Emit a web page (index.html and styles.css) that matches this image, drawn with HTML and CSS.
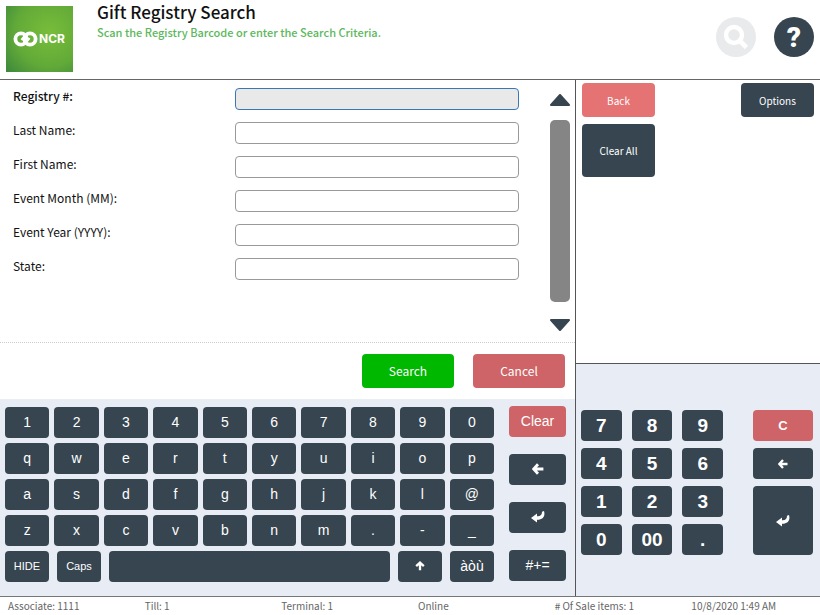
FILE: index.html
```
<!DOCTYPE html>
<html lang="en">
<head>
    <meta charset="UTF-8">
    <meta name="viewport" content="width=device-width, initial-scale=1.0">
    <title>Gift Registry Search</title>
    <link rel="stylesheet" href="styles.css">
</head>
<body>
    <!-- shared icons -->
    <svg class="icon-defs" aria-hidden="true">
        <symbol id="icon-back" viewBox="0 0 12 12">
            <path d="M6 1.2 L1.6 6 L6 10.8 M2 6 H11.4" fill="none" stroke="#fff" stroke-width="2.8"/>
        </symbol>
        <symbol id="icon-up" viewBox="0 0 12 12">
            <path d="M1.4 6.2 L6 2 L10.6 6.2 M6 2.4 V11" fill="none" stroke="#fff" stroke-width="2.8"/>
        </symbol>
        <symbol id="icon-enter" viewBox="0 0 14 12">
            <path d="M0 7 L6 2.6 V5.2 C9.6 5.4 11 3.8 11 .8 L13 0 C14.6 5.6 11.6 9 6 8.8 V11.6 Z" fill="#fff"/>
        </symbol>
    </svg>

    <header class="header">
        <svg class="logo" viewBox="0 0 67 66" role="img" aria-label="NCR">
            <defs>
                <radialGradient id="logo-fill" cx="65%" cy="40%" r="85%">
                    <stop offset="0" stop-color="#78bd3a"/>
                    <stop offset="0.6" stop-color="#62aa38"/>
                    <stop offset="1" stop-color="#3f8a3c"/>
                </radialGradient>
            </defs>
            <rect width="67" height="66" fill="url(#logo-fill)"/>
            <circle cx="15" cy="33" r="5.6" fill="none" stroke="#fff" stroke-width="3.8"/>
            <circle cx="24" cy="33" r="5.6" fill="none" stroke="#fff" stroke-width="3.8"/>
            <path d="M15.5 34 L20 28.5 M19 37.5 L23.5 32" stroke="#fff" stroke-width="2.4"/>
            <text class="logo-text" x="33" y="37">NCR</text>
        </svg>
        <div class="header-text">
            <h1>Gift Registry Search</h1>
            <p>Scan the Registry Barcode or enter the Search Criteria.</p>
        </div>
        <div class="header-buttons">
            <button class="round-button disabled" aria-label="Search" disabled>
                <svg width="26" height="26" viewBox="0 0 26 26">
                    <circle cx="11" cy="11" r="8" fill="none" stroke="#fff" stroke-width="4.4"/>
                    <path d="M17 17 L23.5 23.5" stroke="#fff" stroke-width="4.6"/>
                </svg>
            </button>
            <button class="round-button">?</button>
        </div>
    </header>

    <main class="main">
        <section class="left">
            <div class="form-area">
                <form class="fields" id="searchForm">
                    <label class="active" for="registry">Registry #:</label>
                    <input class="active" type="text" id="registry">
                    <label for="lastName">Last Name:</label>
                    <input type="text" id="lastName">
                    <label for="firstName">First Name:</label>
                    <input type="text" id="firstName">
                    <label for="month">Event Month (MM):</label>
                    <input type="text" id="month">
                    <label for="year">Event Year (YYYY):</label>
                    <input type="text" id="year">
                    <label for="state">State:</label>
                    <input type="text" id="state">
                </form>
                <div class="scroller">
                    <button class="scroll-arrow" aria-label="Scroll up">
                        <svg width="20" height="12" viewBox="0 0 20 12"><path d="M10 1 L19 11 H1 Z" fill="#36454f" stroke="#36454f" stroke-width="2" stroke-linejoin="round"/></svg>
                    </button>
                    <div class="scroll-bar"></div>
                    <button class="scroll-arrow" aria-label="Scroll down">
                        <svg width="20" height="12" viewBox="0 0 20 12"><path d="M10 11 L19 1 H1 Z" fill="#36454f" stroke="#36454f" stroke-width="2" stroke-linejoin="round"/></svg>
                    </button>
                </div>
            </div>

            <div class="actions">
                <button class="search" form="searchForm">Search</button>
                <button class="cancel">Cancel</button>
            </div>

            <div class="keyboard">
                <div class="keys">
                    <div class="key-grid">
                        <button>1</button>
                        <button>2</button>
                        <button>3</button>
                        <button>4</button>
                        <button>5</button>
                        <button>6</button>
                        <button>7</button>
                        <button>8</button>
                        <button>9</button>
                        <button>0</button>
                        <button>q</button>
                        <button>w</button>
                        <button>e</button>
                        <button>r</button>
                        <button>t</button>
                        <button>y</button>
                        <button>u</button>
                        <button>i</button>
                        <button>o</button>
                        <button>p</button>
                        <button>a</button>
                        <button>s</button>
                        <button>d</button>
                        <button>f</button>
                        <button>g</button>
                        <button>h</button>
                        <button>j</button>
                        <button>k</button>
                        <button>l</button>
                        <button>@</button>
                        <button>z</button>
                        <button>x</button>
                        <button>c</button>
                        <button>v</button>
                        <button>b</button>
                        <button>n</button>
                        <button>m</button>
                        <button>.</button>
                        <button>-</button>
                        <button>_</button>
                    </div>
                    <div class="bottom-keys">
                        <button class="small">HIDE</button>
                        <button class="small">Caps</button>
                        <button aria-label="Space"></button>
                        <button aria-label="Shift"><svg width="10" height="10"><use href="#icon-up"/></svg></button>
                        <button>àòù</button>
                    </div>
                </div>
                <div class="side-keys">
                    <button class="red">Clear</button>
                    <button aria-label="Backspace"><svg width="12" height="12"><use href="#icon-back"/></svg></button>
                    <button aria-label="Enter"><svg width="14" height="12"><use href="#icon-enter"/></svg></button>
                    <button>#+=</button>
                </div>
            </div>
        </section>

        <section class="right">
            <div class="menu">
                <div class="menu-column">
                    <button class="back">Back</button>
                    <button class="tall">Clear All</button>
                </div>
                <div class="menu-column">
                    <button>Options</button>
                </div>
            </div>
            <div class="numpad">
                <div class="digits">
                    <button>7</button>
                    <button>8</button>
                    <button>9</button>
                    <button>4</button>
                    <button>5</button>
                    <button>6</button>
                    <button>1</button>
                    <button>2</button>
                    <button>3</button>
                    <button>0</button>
                    <button>00</button>
                    <button>.</button>
                </div>
                <div class="numpad-side">
                    <button class="red">C</button>
                    <button aria-label="Backspace"><svg width="10" height="10"><use href="#icon-back"/></svg></button>
                    <button class="enter" aria-label="Enter"><svg width="14" height="12"><use href="#icon-enter"/></svg></button>
                </div>
            </div>
        </section>
    </main>

    <footer class="footer">
        <span>Associate: 1111</span>
        <span>Till: 1</span>
        <span>Terminal: 1</span>
        <span>Online</span>
        <span># Of Sale items: 1</span>
        <span>10/8/2020 1:49 AM</span>
    </footer>
</body>
</html>
```
FILE: styles.css
```
* {
    box-sizing: border-box;
}
body {
    margin: 0;
    min-height: 100vh;
    display: flex;
    flex-direction: column;
    background-color: #fff;
    color: #111;
    font-family: "Noto Sans CJK SC", "Open Sans", sans-serif;
    font-size: 12px;
}
button {
    display: flex;
    align-items: center;
    justify-content: center;
    padding: 0;
    border: none;
    border-radius: 4px;
    background-color: #36454f;
    color: #fff;
    font-family: inherit;
    font-size: 12px;
    cursor: pointer;
}
.icon-defs {
    display: none;
}

/* Header */
.header {
    display: flex;
    align-items: flex-start;
    height: 80px;
    padding: 0 6px;
    border-bottom: 1px solid #666;
}
.logo {
    width: 67px;
    height: 66px;
    margin-top: 6px;
}
.logo-text {
    fill: #fff;
    font-family: Inter, sans-serif;
    font-size: 12px;
    font-weight: 700;
}
.header-text {
    flex: 1;
    margin-left: 24px;
}
.header-text h1 {
    margin: 0;
    font-size: 17px;
    font-weight: 500;
    line-height: 24px;
}
.header-text p {
    margin: 0;
    color: #5cb85c;
    font-size: 11px;
    font-weight: 500;
    line-height: 16px;
}
.header-buttons {
    display: flex;
    gap: 18px;
    margin-top: 17px;
}
.round-button {
    width: 40px;
    height: 40px;
    border-radius: 50%;
    font-family: Roboto, sans-serif;
    font-size: 28px;
    font-weight: 900;
}
.round-button.disabled {
    background-color: #e9eaeb;
}

/* Main */
.main {
    flex: 1;
    display: grid;
    grid-template-columns: 575fr 245fr;
}
.left {
    display: flex;
    flex-direction: column;
}
.form-area {
    flex: 1;
    display: flex;
    padding: 8px 5px 11px 13px;
    border-bottom: 1px dotted #ccc;
}
.fields {
    flex: 1;
    display: grid;
    grid-template-columns: 222px 1fr;
    grid-auto-rows: 22px;
    row-gap: 12px;
    align-content: start;
}
.fields label {
    line-height: 16px;
}
.fields label.active {
    font-weight: 500;
}
.fields input {
    width: 100%;
    height: 22px;
    padding: 0 6px;
    border: 1px solid #999;
    border-radius: 4px;
    background-color: #fff;
    font-family: inherit;
    font-size: 12px;
}
.fields input.active {
    border-color: #3a78b5;
    background-color: #eae9ea;
}
.scroller {
    display: flex;
    flex-direction: column;
    gap: 14px;
    width: 20px;
    margin: 6px 0 0 31px;
}
.scroll-arrow {
    height: 12px;
    background: none;
}
.scroll-bar {
    flex: 1;
    margin-bottom: 3px;
    border-radius: 5px;
    background-color: #858585;
}
.actions {
    display: flex;
    justify-content: flex-end;
    gap: 19px;
    padding: 11px 10px;
}
.actions button {
    width: 92px;
    height: 34px;
    padding-bottom: 2px;
}
.actions .search {
    background-color: #00b800;
}
.actions .cancel,
.red {
    background-color: #ce6467;
}

/* Keyboard */
.keyboard {
    display: flex;
    gap: 15px;
    padding: 8px 9px 14px 5px;
    background-color: #e8edf5;
}
.keyboard button {
    height: 31px;
    padding-bottom: 2px;
    font-family: "Liberation Sans", sans-serif;
    font-size: 14px;
}
.keyboard .small {
    font-size: 11px;
}
.keys {
    flex: 1;
}
.key-grid {
    display: grid;
    grid-template-columns: repeat(10, 1fr);
    gap: 5px;
}
.bottom-keys {
    display: grid;
    grid-template-columns: 44px 44px 1fr 44px 44px;
    gap: 8px;
    margin-top: 5px;
}
.side-keys {
    display: flex;
    flex-direction: column;
    gap: 17px;
    width: 57px;
    margin-top: -1px;
}

/* Right side */
.right {
    display: flex;
    flex-direction: column;
    border-left: 1px solid #555;
}
.menu {
    flex: 1;
    display: flex;
    justify-content: space-between;
    padding: 3px 6px 0;
}
.menu-column {
    display: flex;
    flex-direction: column;
    gap: 7px;
}
.menu button {
    width: 73px;
    height: 34px;
    font-size: 10px;
}
.menu .back {
    background-color: #e57373;
}
.menu .tall {
    height: 53px;
}
.numpad {
    display: flex;
    justify-content: space-between;
    gap: 30px;
    padding: 46px 7px 41px 5px;
    border-top: 1px solid #555;
    background-color: #e8edf5;
}
.numpad button {
    height: 31px;
    font-family: "Liberation Sans", sans-serif;
    font-weight: 700;
}
.digits {
    flex: 1;
    display: grid;
    grid-template-columns: repeat(3, 1fr);
    gap: 7px 10px;
}
.digits button {
    font-size: 19px;
}
.numpad-side {
    display: flex;
    flex-direction: column;
    gap: 7px;
    width: 60px;
}
.numpad-side .red {
    font-size: 13px;
}
.numpad .enter {
    height: 69px;
}

/* Status bar */
.footer {
    display: grid;
    grid-template-columns: repeat(6, 1fr);
    border-top: 1px solid #777;
    color: #666;
    font-size: 10px;
    line-height: 18px;
}
.footer span {
    padding-left: 8px;
    white-space: nowrap;
}
```
